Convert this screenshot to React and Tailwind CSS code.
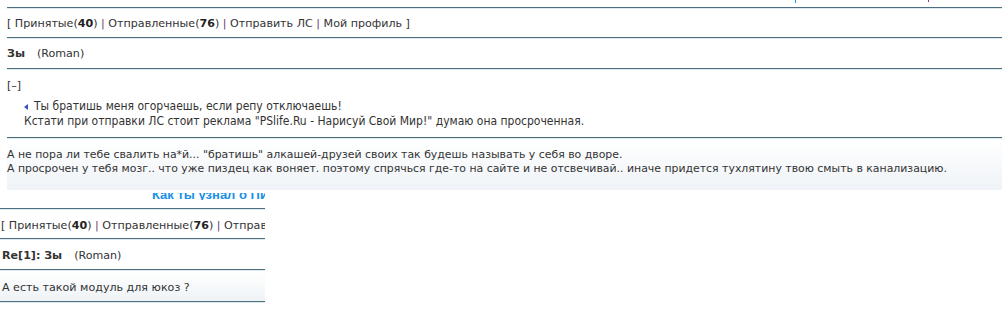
import React from 'react';

const Rule = () => (
    <div className="border-t border-[#4d6e7e] border-b border-b-[#dfeaf0]" />
);

const Nav = ({ full = true }) => (
    <div className="whitespace-nowrap">
        [ Принятые(<b className="text-[#222]">40</b>) <span className="text-[#6b3a6b]">|</span> Отправленные(<b className="text-[#222]">76</b>) <span className="text-[#6b3a6b]">|</span> Отправить ЛС
        {full && (
            <>
                {' '}<span className="text-[#6b3a6b]">|</span> Мой профиль ]
            </>
        )}
    </div>
);

const App = () => {
    return (
        <div className="w-[1002px] h-[313px] bg-white overflow-hidden text-[#333] font-['DejaVu_Sans',sans-serif] text-[11.1px]">
            {/* top message */}
            <div className="ml-[7px]">
                {/* clipped descenders of the line above */}
                <div className="h-[7px] flex">
                    <div className="ml-[788px] w-px h-[3px] bg-[#1a90e6]" />
                    <div className="ml-[132px] w-px h-[2px] bg-[#8a3a8a]" />
                </div>
                <Rule />
                <div className="h-[28px] pt-[3px] flex items-center">
                    <Nav />
                </div>
                <Rule />
                <div className="h-[29px] pt-[2px] flex items-center">
                    <b className="text-[#333]">Зы</b>
                    <span className="ml-[12px]">(Roman)</span>
                </div>
                <Rule />
                <div className="h-[67px] pt-[9px]">
                    <div className="leading-[14px]">[–]</div>
                    <div className="mt-[6px] ml-[17px] font-['DejaVu_Sans_Condensed',sans-serif] text-[12px] leading-[15px]">
                        <div className="flex items-center">
                            <svg width="5" height="6" viewBox="0 0 5 6" className="mr-[5px]">
                                <path d="M4 0 L0 3 L4 6 Z" fill="#3b50c8" />
                            </svg>
                            Ты братишь меня огорчаешь, если репу отключаешь!
                        </div>
                        <div>Кстати при отправки ЛС стоит реклама "PSlife.Ru - Нарисуй Свой Мир!" думаю она просроченная.</div>
                    </div>
                </div>
                <Rule />
                <div className="h-[51px] pt-[9px] leading-[14px] text-[10.9px] bg-gradient-to-b from-white to-[#eff3f7]">
                    <div>А не пора ли тебе свалить на*й... "братишь" алкашей-друзей своих так будешь называть у себя во дворе.</div>
                    <div>А просрочен у тебя мозг.. что уже пиздец как воняет. поэтому спрячься где-то на сайте и не отсвечивай.. иначе придется тухлятину твою смыть в канализацию.</div>
                </div>
            </div>

            {/* second message, cropped */}
            <div className="w-[265px] overflow-hidden">
                <div className="h-[3px]" />
                <div className="h-[7px] overflow-hidden pl-[152px]">
                    <div className="-mt-[6px] whitespace-nowrap font-['Liberation_Sans',sans-serif] font-bold text-[13px] leading-[15px] text-[#1a8fe6]">
                        Как ты узнал о ПИ
                    </div>
                </div>
                <div className="h-[8px]" />
                <Rule />
                <div className="h-[28px] pt-[4px] flex items-center pl-[1px]">
                    <Nav full={false} />
                </div>
                <Rule />
                <div className="h-[29px] pt-[4px] flex items-center pl-[2px]">
                    <b className="text-[#333]">Re[1]: Зы</b>
                    <span className="ml-[12px]">(Roman)</span>
                </div>
                <Rule />
                <div className="h-[30px] pt-[5px] flex items-center pl-[2px] bg-gradient-to-b from-white to-[#eef3f6]">
                    А есть такой модуль для юкоз ?
                </div>
                <Rule />
            </div>
        </div>
    );
};

export default App;
